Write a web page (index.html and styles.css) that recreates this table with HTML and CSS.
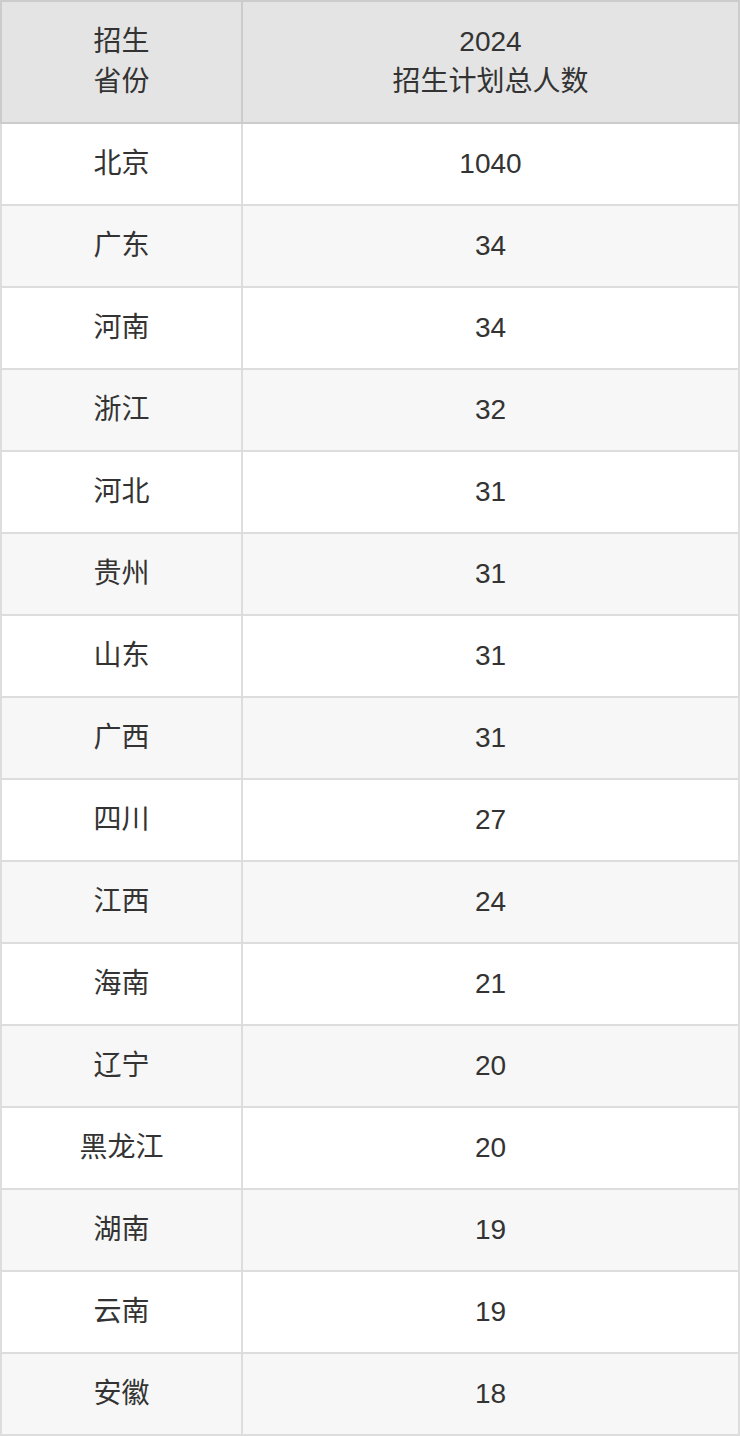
FILE: index.html
```html
<!DOCTYPE html>
<html lang="zh">
<head>
<meta charset="utf-8">
<link rel="stylesheet" href="styles.css">
</head>
<body>
<table class="plan">
  <thead>
    <tr><th class="col-prov">招生<br>省份</th><th>2024<br>招生计划总人数</th></tr>
  </thead>
  <tbody>
    <tr><td>北京</td><td>1040</td></tr>
    <tr><td>广东</td><td>34</td></tr>
    <tr><td>河南</td><td>34</td></tr>
    <tr><td>浙江</td><td>32</td></tr>
    <tr><td>河北</td><td>31</td></tr>
    <tr><td>贵州</td><td>31</td></tr>
    <tr><td>山东</td><td>31</td></tr>
    <tr><td>广西</td><td>31</td></tr>
    <tr><td>四川</td><td>27</td></tr>
    <tr><td>江西</td><td>24</td></tr>
    <tr><td>海南</td><td>21</td></tr>
    <tr><td>辽宁</td><td>20</td></tr>
    <tr><td>黑龙江</td><td>20</td></tr>
    <tr><td>湖南</td><td>19</td></tr>
    <tr><td>云南</td><td>19</td></tr>
    <tr><td>安徽</td><td>18</td></tr>
  </tbody>
</table>
</body>
</html>
```
FILE: styles.css
```css
html, body {
  margin: 0;
  padding: 0;
  background: #fff;
}
.plan {
  width: 740px;
  border-collapse: collapse;
  table-layout: fixed;
  font-family: "Liberation Sans", "Noto Sans CJK SC", sans-serif;
  font-size: 28px;
  color: #333;
  text-align: center;
}
.plan th, .plan td {
  padding: 0;
  font-weight: normal;
  vertical-align: middle;
}
.plan th {
  background: #e4e4e4;
  border: 2px solid #cccccc;
  height: 120px;
  line-height: 40px;
}
.plan .col-prov {
  width: 239px;
}
.plan td {
  border: 2px solid #dddddd;
  height: 80px;
  line-height: 40px;
}
.plan tbody tr:nth-child(even) td {
  background: #f7f7f7;
}
```
